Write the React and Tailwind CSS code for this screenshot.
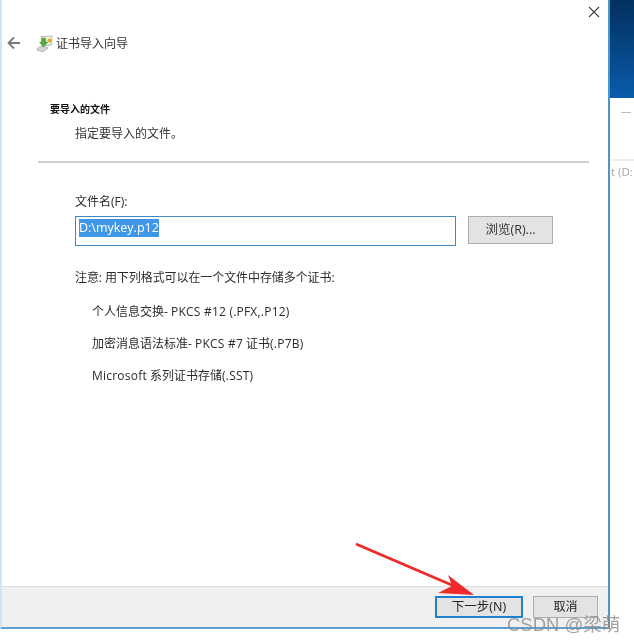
import React from "react";

const font = { fontFamily: '"Open Sans","Noto Sans CJK SC",sans-serif' };

function WizardIcon() {
  return (
    <svg width="18" height="18" viewBox="0 0 18 18" className="shrink-0">
      <path d="M5 1.5 L16 1 L15.5 10 L6 11 Z" fill="#eef0e6" stroke="#a9ad9f" strokeWidth="0.8" />
      <path d="M1 13.5 L7 11 L12 13 L7 16.5 L1.5 15.5 Z" fill="#d5d8d8" stroke="#9a9fa3" strokeWidth="0.7" />
      <path d="M6 3 L9.5 3 L9.5 7 L12 7 L7.5 12 L3.5 7.2 L6 7 Z" fill="#4fae3a" stroke="#3c8a2c" strokeWidth="0.4" />
      <circle cx="13.5" cy="5.5" r="2" fill="#e2a92f" />
    </svg>
  );
}

export default function App() {
  return (
    <div className="relative w-[634px] h-[643px] bg-white overflow-hidden text-[12px] text-[#2b2b2b] blur-[0.35px]" style={font}>
      <div className="flex h-[629px]">
        <div className="w-[610px] flex flex-col border-l-2 border-r-2 border-b-2 border-l-[#d3e5f2] border-r-[#4c96c8] border-b-[#5a9fd0] bg-white">
          <div className="flex-1 flex flex-col">
            <div className="h-[87px] flex items-start pt-[35px] pl-[4px]">
              <svg width="16" height="16" viewBox="0 0 16 16" className="mt-[0px] shrink-0" fill="none" stroke="#7a7a7a" strokeWidth="1.8">
                <path d="M14 8 H2.5 M8 2.5 L2.5 8 L8 13.5" />
              </svg>
              <div className="ml-[14px]"><WizardIcon /></div>
              <span className="ml-[2px] leading-[17px] text-[#333]">证书导入向导</span>
            </div>
            <div className="pl-[48px] h-[17px] text-[10px] leading-[14px] font-bold text-[#111] pt-[15px] box-content">要导入的文件</div>
            <div className="pl-[73px] mt-[7px] leading-[16px] text-[#333]">指定要导入的文件。</div>
            <div className="ml-[36px] w-[551px] mt-[19px] h-[2px] bg-[#cfcfcf]" />
            <div className="pl-[73px] mt-[31px] leading-[16px]">文件名(F):</div>
            <div className="pl-[73px] mt-[6px] flex items-start">
              <div className="w-[381px] h-[30px] border border-[#3f8bc0] pl-[3px] pt-[2px] flex items-start">
                <span className="bg-[#3f97ea] text-white text-[12.5px] leading-[18px]">D:\mykey.p12</span>
              </div>
              <button className="ml-[12px] w-[85px] h-[28px] border border-[#acacac] bg-[#e3e3e3] text-[12.5px] text-[#333]">浏览(R)...</button>
            </div>
            <div className="pl-[73px] mt-[24px] leading-[16px] tracking-[-0.08px]">注意: 用下列格式可以在一个文件中存储多个证书:</div>
            <div className="pl-[90px] mt-[18px] leading-[16px]">个人信息交换- <span className="tracking-[0.22px]">PKCS #12 (.PFX,.P12)</span></div>
            <div className="pl-[90px] mt-[16px] leading-[16px]">加密消息语法标准- <span className="tracking-[0.22px]">PKCS #7</span> 证书<span className="tracking-[0.22px]">(.P7B)</span></div>
            <div className="pl-[90px] mt-[16px] leading-[16px]"><span className="tracking-[0.22px]">Microsoft</span> 系列证书存储<span className="tracking-[0.22px]">(.SST)</span></div>
          </div>
          <div className="h-[41px] bg-[#f0f0f0] border-t border-[#dfdfdf] flex items-start justify-end pt-[9px] pr-[10px] gap-[10px] shrink-0">
            <button className="w-[88px] h-[22px] border-2 border-[#1f7fd0] bg-[#e3e3e3] text-[12.5px] leading-[16px] text-[#222]">下一步(N)</button>
            <button className="w-[65px] h-[22px] border border-[#adadad] bg-[#e3e3e3] text-[12px] leading-[16px] text-[#222]">取消</button>
          </div>
        </div>
        <div className="flex-1 flex flex-col overflow-hidden">
          <div className="h-[98px] bg-gradient-to-b from-[#03305f] to-[#0a5cab] shrink-0" />
          <div className="h-[61px] flex pt-[14px] pl-[11px] shrink-0">
            <div className="w-[10px] h-[1px] bg-[#bdbdbd]" />
          </div>
          <div className="h-[2px] bg-[#eeeeee] shrink-0" />
          <div className="pt-[3px] pl-[1px] text-[11.5px] leading-[16px] text-[#a8a8a8] whitespace-nowrap">t (D:</div>
        </div>
      </div>

      <svg className="absolute left-[349px] top-[537px]" width="130" height="70" viewBox="0 0 130 70" fill="none">
        <path d="M7 7 L112 52" stroke="#ee2a2a" strokeWidth="2.8" />
        <path d="M132 60 L106 40 L110 51 L96 58 Z" fill="#ee2a2a" transform="translate(-7 -2)" />
      </svg>

      <div className="absolute left-[507px] top-[613px] text-[18.5px] leading-[24px] text-[#8c8c8c]/80 whitespace-nowrap" style={{ fontFamily: '"Liberation Sans","Noto Sans CJK SC",sans-serif' }}>
        CSDN @梁萌
      </div>

      <svg className="absolute left-[587px] top-[5px]" width="14" height="14" viewBox="0 0 14 14" stroke="#444" strokeWidth="1.1" fill="none">
        <path d="M2 2 L12 12 M12 2 L2 12" />
      </svg>
    </div>
  );
}
